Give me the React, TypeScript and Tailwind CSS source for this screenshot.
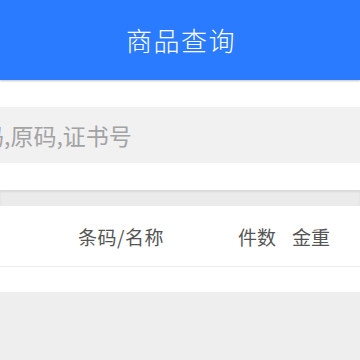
export default function App() {
  return (
    <div
      className="w-[360px] h-[360px] overflow-hidden bg-[#eeeeee] flex flex-col"
      style={{ fontFamily: '"Noto Sans CJK SC", "Noto Sans", sans-serif' }}
    >
      {/* Title bar */}
      <div className="h-[80px] shrink-0 bg-[#2a7bff] flex items-center justify-center shadow-[0_1px_2px_rgba(0,0,0,0.25)] relative z-10">
        <span className="text-white text-[26px] font-light leading-none tracking-[1.5px] pl-[2px]">商品查询</span>
      </div>

      {/* Search */}
      <div className="h-[110px] shrink-0 bg-white pt-[27px]">
        <div className="h-[56px] bg-[#f1f1f1] flex items-center overflow-hidden">
          <span className="whitespace-nowrap -ml-[42px] text-[23px] text-[#a3a3a3] leading-none">
            条码,原码,证书号
          </span>
        </div>
      </div>

      {/* Gap */}
      <div className="h-[16px] shrink-0 bg-[#ebebeb] shadow-[inset_0_2px_2px_rgba(0,0,0,0.08)]" />

      {/* Table header */}
      <div className="bg-white shrink-0">
        <div className="h-[61px] flex items-center border-b border-[#ececec] text-[19px] text-[#555555] leading-none">
          <span className="ml-[78px] tracking-[0.5px]">条码/名称</span>
          <span className="ml-[74px]">件数</span>
          <span className="ml-[16px]">金重</span>
        </div>
        <div className="h-[25px]" />
      </div>
    </div>
  );
}
